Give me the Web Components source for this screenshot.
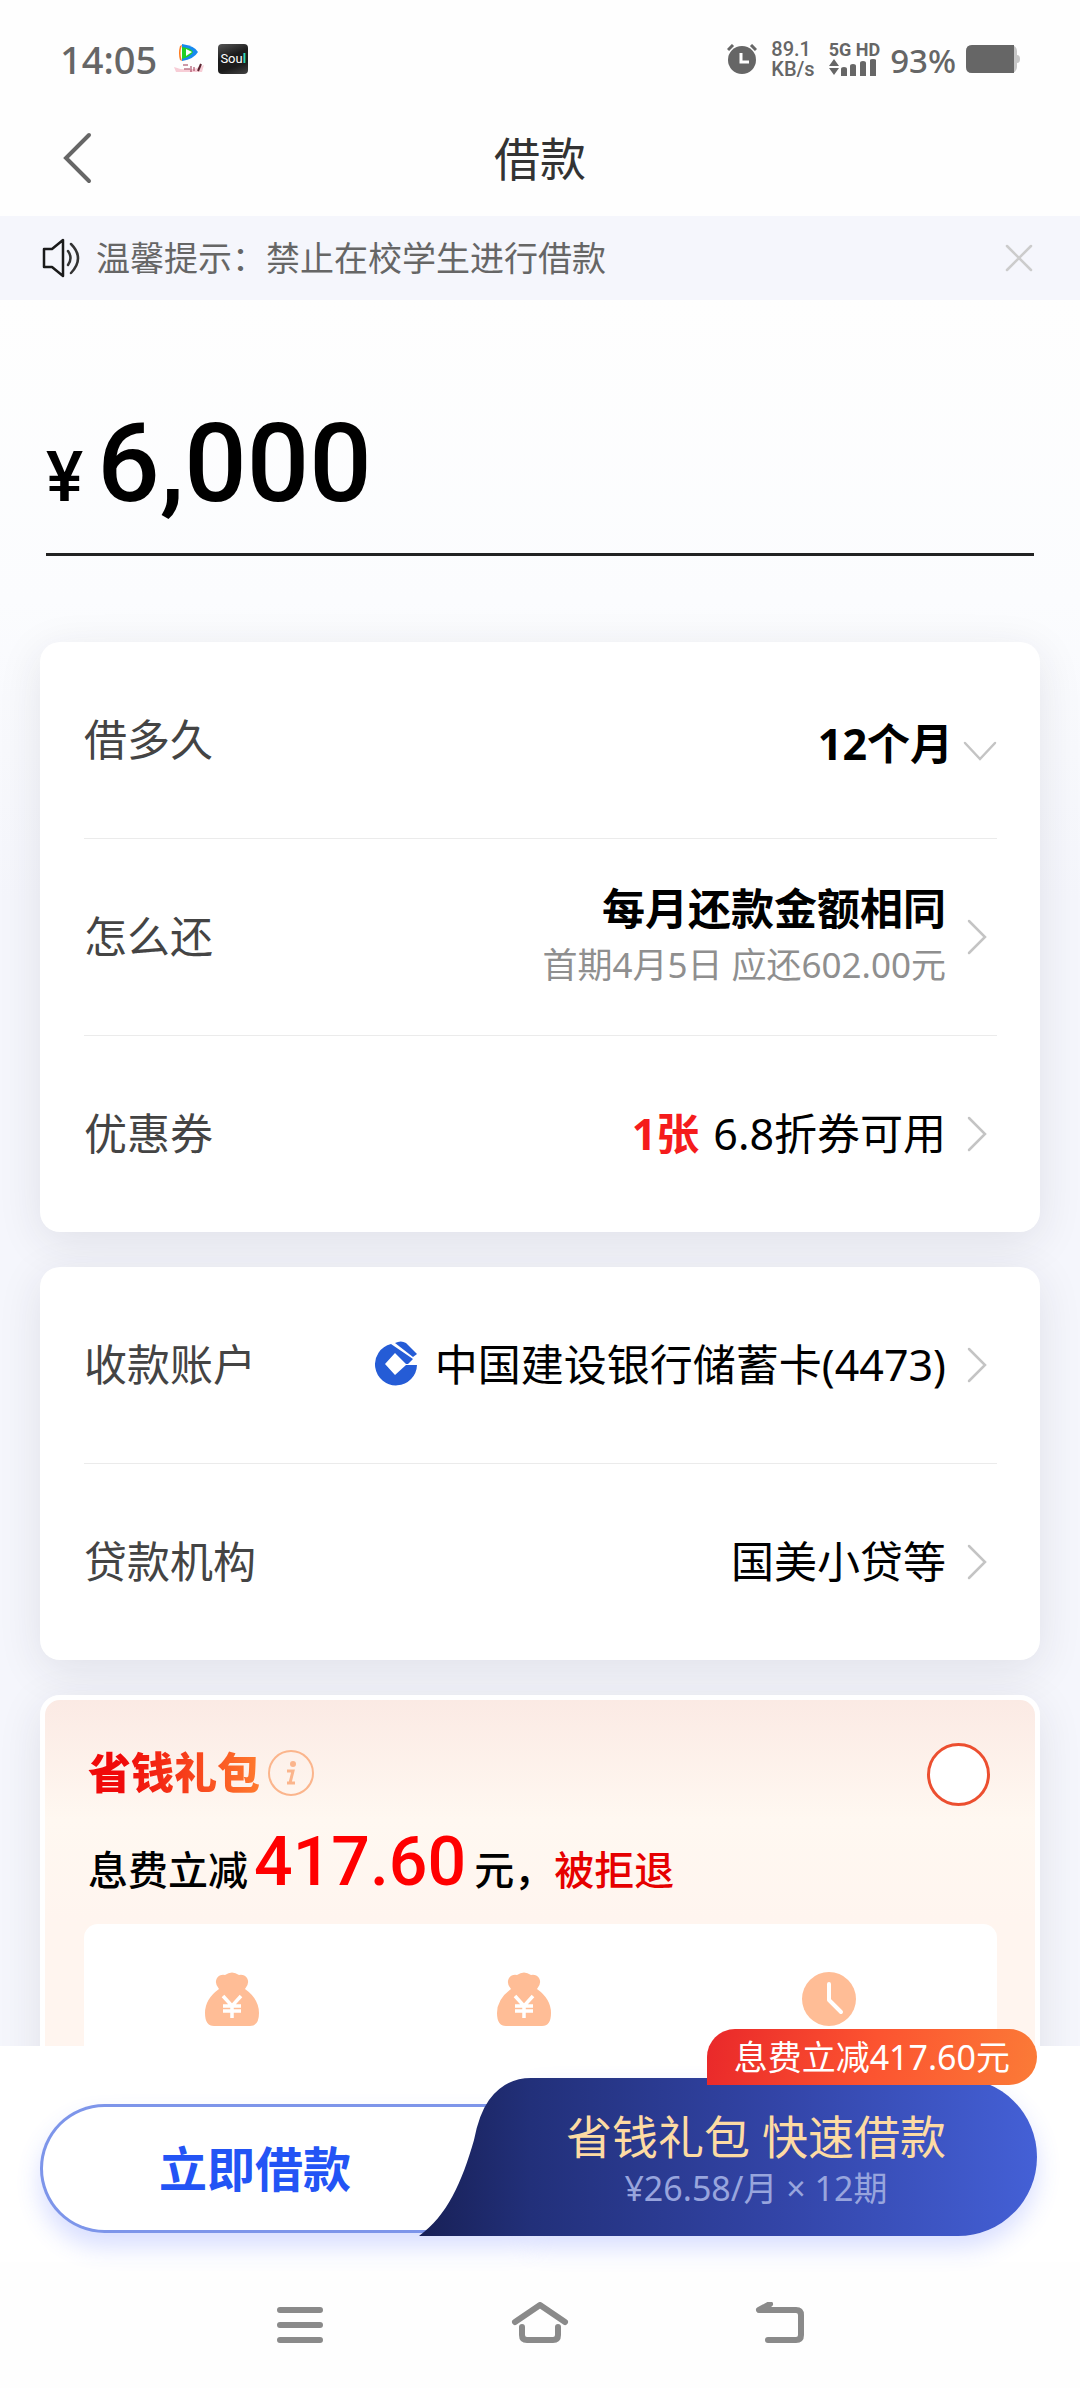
<!DOCTYPE html>
<html lang="zh-CN">
<head>
<meta charset="utf-8">
<meta name="viewport" content="width=device-width, initial-scale=1">
<title>借款</title>
<style>
    html, body {
        margin: 0;
        height: 100%;
    }

    body {
        font-family: "Noto Sans", "Noto Sans CJK SC", sans-serif;
        color: #000;
        background: #fefefe;
    }
</style>
</head>
<body>
<loan-page></loan-page>

<script>
// ---------- icons ----------
const icons = {
    back: '<svg width="30" height="52" viewBox="0 0 30 52"><path d="M27 3 4 26l23 23" fill="none" stroke="#666" stroke-width="4" stroke-linecap="round"/></svg>',
    speaker: '<svg width="40" height="40" viewBox="0 0 40 40" fill="none" stroke="#1a1a1a" stroke-width="2.5" stroke-linejoin="round"><path d="M2 11h8L21 2v36L10 29H2z"/><path d="M26 13q5 7 0 14M29 6q14 14 0 29" stroke="#333" stroke-linecap="round"/></svg>',
    close: '<svg width="28" height="28" viewBox="0 0 28 28"><path d="m2 2 24 24M26 2 2 26" stroke="#ccc" stroke-width="2.5" stroke-linecap="round"/></svg>',
    right: '<svg width="20" height="36" viewBox="0 0 20 36"><path d="m2 2 16 16L2 34" fill="none" stroke="#c4c4c4" stroke-width="2.5" stroke-linecap="round"/></svg>',
    down: '<svg width="34" height="20" viewBox="0 0 34 20"><path d="m2 2 15 16L32 2" fill="none" stroke="#c4c4c4" stroke-width="2.5" stroke-linecap="round"/></svg>',
    bank: '<svg width="42" height="48" viewBox="0 0 42 48"><path d="M16 3A21 21 0 1 0 42 24H31L20 34 10 23 20 12l11 11h2l5-5z" fill="#255cd6"/><path d="M20 2q6-3 11 0l11 11-4 3z" fill="#255cd6"/></svg>',
    bag: '<svg width="54" height="54" viewBox="0 0 54 54"><path d="M14 17q-5-6-2-11 3-4 8-3 7-5 14 0 5-1 8 3 3 5-2 11 14 10 14 24 0 13-9 13H9Q0 54 0 41q0-14 14-24z" fill="#ffbd96"/><path d="m18 24 9 10 9-10M27 34v12M18 34h18M18 39h18" fill="none" stroke="#fff" stroke-width="3.5"/></svg>',
    clock: '<svg width="54" height="54" viewBox="0 0 54 54"><circle cx="27" cy="27" r="27" fill="#ffbd96"/><path d="M27 12v16l12 12" fill="none" stroke="#fff" stroke-width="4" stroke-linecap="round" stroke-linejoin="round"/></svg>',
    info: '<svg width="46" height="46" viewBox="0 0 46 46"><circle cx="23" cy="23" r="22" fill="none" stroke="#fbb58c" stroke-width="2"/><circle cx="25" cy="14" r="3" fill="#fbb58c"/><path d="M19 21h6l-3 12h5M19 33h5" fill="none" stroke="#fbb58c" stroke-width="3"/></svg>',
    menu: '<svg width="58" height="46" viewBox="0 0 58 46"><path d="M9 8h40M9 23h40M9 38h40" stroke="#8a8a8a" stroke-width="6" stroke-linecap="round"/></svg>',
    home: '<svg width="58" height="46" viewBox="0 0 58 46" fill="none" stroke="#8a8a8a" stroke-width="6" stroke-linecap="round" stroke-linejoin="round"><path d="M4 20 29 3l25 17M11 25v8q0 5 5 5h26q5 0 5-5v-8"/></svg>',
    ret: '<svg width="58" height="46" viewBox="0 0 58 46" fill="none" stroke="#8a8a8a" stroke-width="6" stroke-linecap="round" stroke-linejoin="round"><path d="M19 2 8 8h37q5 0 5 5v20q0 5-5 5H17"/></svg>',
    alarm: '<svg width="30" height="30" viewBox="0 0 30 30"><circle cx="15" cy="16" r="14" fill="#666"/><path d="M14 9v9h8" fill="none" stroke="#fff" stroke-width="3"/><path d="m1 6 5-5M29 6l-5-5" stroke="#666" stroke-width="3"/></svg>',
    signal: '<svg width="48" height="18" viewBox="0 0 48 18" fill="#666"><path d="m5 0 5 7H0zM0 9h10l-5 7zM12 10q0-2 3-2t3 2v7h-6zM21 7q0-2 3-2t3 2v10h-6zM31 4q0-2 3-2t3 2v13h-6zM41 1q0-1 3-1t3 1v16h-6z"/></svg>',
    battery: '<svg width="54" height="28" viewBox="0 0 54 28"><rect width="51" height="28" rx="6" fill="#c6c6c6"/><path d="M51 10q3 0 3 4t-3 4z" fill="#c6c6c6"/><path d="M6 0h42v28H6q-6 0-6-6V6q0-6 6-6z" fill="#666"/></svg>',
    video: '<svg width="30" height="30" viewBox="0 0 30 30"><path d="M8 1Q5 9 8 17l-2-1Q4 9 6 2z" fill="#ff7a1c"/><path d="M8 0q13 2 16 8-4 7-16 9z" fill="#1689ee"/><path d="M8 3q9 1 11 5-3 5-11 7z" fill="#21cf25"/><path d="m12 5 6 3-6 4z" fill="#fff"/><path d="M0 23q15 6 30-2l-2 7H2z" fill="#f7cdd6"/><path d="M9 21h5M10 25h6M17 22v6M20 23v4" stroke="#9b3550" stroke-width="1"/><path d="m24 27 3-7" stroke="#5c2430" stroke-width="2"/></svg>'
};

class UiIcon extends HTMLElement {
    constructor() {
        super();
        this.attachShadow({ mode: 'open' });
    }

    connectedCallback() {
        this.shadowRoot.innerHTML = `
            <style>:host{ display:inline-flex; flex:none; } svg{ display:block; }</style>
            ${icons[this.getAttribute('name')] || ''}`;
    }
}

window.customElements.define('ui-icon', UiIcon);

// ---------- status bar ----------
const status_bar = document.createElement('template');
status_bar.innerHTML = `
    <style>
        :host{
            display: flex;
            align-items: center;
            justify-content: space-between;
            height: 82px;
            padding: 18px 60px 0 60px;
            color: #666;
            font-weight: 500;
        }

        .side{
            display: flex;
            align-items: center;
        }

        time{
            font-size: 38px;
            line-height: 40px;
            margin-right: 17px;
        }

        .soul{
            width: 30px;
            height: 30px;
            margin-left: 14px;
            border-radius: 4px;
            background: linear-gradient(160deg, #555, #1c1c1c 40%, #1c1c1c 70%, #444);
            color: #fff;
            font: 13px/30px Roboto, sans-serif;
            text-align: center;
        }

        .soul b{
            color: #2fd8b8;
        }

        .stack{
            display: flex;
            flex-direction: column;
            font-size: 20px;
            line-height: 20px;
        }

        .speed{
            margin: 0 14px;
            font-family: Roboto, sans-serif;
        }

        .net span{
            font-family: Roboto, sans-serif;
            font-size: 18px;
            font-weight: 700;
            line-height: 18px;
        }

        .percent{
            font-size: 33px;
            line-height: 40px;
            margin: 4px 10px 0;
        }
    </style>
    <div class="side">
        <time>14:05</time>
        <ui-icon name="video"></ui-icon>
        <span class="soul">Sou<b>l</b></span>
    </div>
    <div class="side">
        <ui-icon name="alarm"></ui-icon>
        <span class="stack speed"><span>89.1</span><span>KB/s</span></span>
        <span class="stack net"><span>5G HD</span><ui-icon name="signal"></ui-icon></span>
        <span class="percent">93%</span>
        <ui-icon name="battery"></ui-icon>
    </div>
`;

class StatusBar extends HTMLElement {
    constructor() {
        super();
        this.attachShadow({ mode: 'open' });
        this.shadowRoot.appendChild(status_bar.content.cloneNode(true));
    }
}

window.customElements.define('status-bar', StatusBar);

// ---------- title bar ----------
const title_bar = document.createElement('template');
title_bar.innerHTML = `
    <style>
        :host{
            display: grid;
            grid-template-columns: 1fr auto 1fr;
            align-items: center;
            height: 116px;
            padding: 0 62px;
        }

        button{
            display: flex;
            justify-self: start;
            padding: 0;
            border: 0;
            background: none;
        }

        h1{
            margin: 0;
            color: #333;
            font-size: 46px;
            font-weight: 400;
            line-height: 56px;
        }
    </style>
    <button aria-label="返回"><ui-icon name="back"></ui-icon></button>
    <h1><slot></slot></h1>
`;

class TitleBar extends HTMLElement {
    constructor() {
        super();
        this.attachShadow({ mode: 'open' });
        this.shadowRoot.appendChild(title_bar.content.cloneNode(true));
    }
}

window.customElements.define('title-bar', TitleBar);

// ---------- notice ----------
const notice_bar = document.createElement('template');
notice_bar.innerHTML = `
    <style>
        :host{
            display: flex;
            align-items: center;
            height: 84px;
            padding: 0 47px 0 42px;
            background: #f5f6fc;
            color: #666;
            font-size: 34px;
            line-height: 40px;
        }

        span{
            flex: 1;
            margin-left: 14px;
        }

        button{
            display: flex;
            padding: 0;
            border: 0;
            background: none;
        }
    </style>
    <ui-icon name="speaker"></ui-icon>
    <span><slot></slot></span>
    <button aria-label="关闭"><ui-icon name="close"></ui-icon></button>
`;

class NoticeBar extends HTMLElement {
    constructor() {
        super();
        this.attachShadow({ mode: 'open' });
        this.shadowRoot.appendChild(notice_bar.content.cloneNode(true));
        this.shadowRoot.querySelector('button').onclick = () => this.remove();
    }
}

window.customElements.define('notice-bar', NoticeBar);

// ---------- amount ----------
const loan_amount = document.createElement('template');
loan_amount.innerHTML = `
    <style>
        :host{
            display: flex;
            align-items: baseline;
            gap: 14px;
            margin: 0 46px;
            padding: 104px 0 29px;
            border-bottom: 3px solid #222;
            font-family: Roboto, sans-serif;
            font-weight: 500;
        }

        label{
            font-size: 70px;
            line-height: 80px;
        }

        input{
            flex: 1;
            min-width: 0;
            height: 120px;
            padding: 0;
            border: 0;
            outline: 0;
            background: none;
            color: inherit;
            font: inherit;
            font-size: 110px;
            line-height: 120px;
        }
    </style>
    <label for="amount">¥</label>
    <input id="amount" type="text" inputmode="numeric">
`;

class LoanAmount extends HTMLElement {
    constructor() {
        super();
        this.attachShadow({ mode: 'open' });
        this.shadowRoot.appendChild(loan_amount.content.cloneNode(true));
    }

    connectedCallback() {
        this.shadowRoot.querySelector('input').value = this.getAttribute('value');
    }
}

window.customElements.define('loan-amount', LoanAmount);

// ---------- card + rows ----------
const loan_card = document.createElement('template');
loan_card.innerHTML = `
    <style>
        :host{
            display: block;
            margin: 0 40px;
            padding: 0 43px 0 44px;
            border-radius: 20px;
            background: #fff;
            box-shadow: 0 10px 44px rgba(40, 40, 60, .1);
        }
    </style>
    <slot></slot>
`;

class LoanCard extends HTMLElement {
    constructor() {
        super();
        this.attachShadow({ mode: 'open' });
        this.shadowRoot.appendChild(loan_card.content.cloneNode(true));
    }
}

window.customElements.define('loan-card', LoanCard);

const row_style = `
    <style>
        :host{
            display: block;
            border-bottom: 1px solid #ebebeb;
            font-size: 43px;
            line-height: 56px;
        }

        :host(:last-child){
            border-bottom: 0;
        }

        .row{
            display: flex;
            align-items: center;
            height: 196px;
            color: #000;
            text-decoration: none;
        }

        .label{
            flex: 1;
            color: #444;
        }
    </style>
`;

const loan_row = document.createElement('template');
loan_row.innerHTML = row_style + `
    <style>
        .value{
            display: flex;
            flex-direction: column;
            align-items: flex-end;
            margin-right: 21px;
        }

        .line{
            display: flex;
            align-items: center;
        }

        ::slotted(b){
            margin-right: 14px;
            color: #f51c1c;
        }

        ::slotted(ui-icon){
            margin-right: 18px;
        }

        ::slotted(small){
            color: #8f8f8f;
            font-size: 35px;
            line-height: 56px;
        }

        ui-icon{
            margin-right: 10px;
        }
    </style>
    <a class="row" href="#">
        <span class="label"></span>
        <span class="value">
            <span class="line"><slot></slot></span>
            <slot name="sub"></slot>
        </span>
        <ui-icon name="right"></ui-icon>
    </a>
`;

class LoanRow extends HTMLElement {
    constructor() {
        super();
        this.attachShadow({ mode: 'open' });
        this.shadowRoot.appendChild(loan_row.content.cloneNode(true));
    }

    connectedCallback() {
        this.shadowRoot.querySelector('.label').textContent = this.getAttribute('label');
    }
}

window.customElements.define('loan-row', LoanRow);

const loan_term = document.createElement('template');
loan_term.innerHTML = row_style + `
    <style>
        select{
            appearance: none;
            margin-right: 10px;
            padding: 0;
            border: 0;
            background: none;
            color: #000;
            font: inherit;
            font-weight: 700;
            text-align: right;
        }

        .pick{
            display: flex;
            align-items: center;
            padding-top: 8px;
        }

        ui-icon{
            margin-top: 14px;
        }
    </style>
    <div class="row">
        <label class="label" for="term">借多久</label>
        <span class="pick">
            <select id="term">
                <option>3个月</option>
                <option>6个月</option>
                <option selected>12个月</option>
            </select>
            <ui-icon name="down"></ui-icon>
        </span>
    </div>
`;

class LoanTerm extends HTMLElement {
    constructor() {
        super();
        this.attachShadow({ mode: 'open' });
        this.shadowRoot.appendChild(loan_term.content.cloneNode(true));
    }
}

window.customElements.define('loan-term', LoanTerm);

// ---------- gift pack ----------
const gift_card = document.createElement('template');
gift_card.innerHTML = `
    <style>
        :host{
            display: block;
            margin: 0 40px;
            padding: 43px 38px 0 39px;
            border: 5px solid #fff;
            border-radius: 20px;
            background: linear-gradient(#fbeae4, #fff8f1 120px, #fff5ef 220px);
            box-shadow: 0 10px 44px rgba(40, 40, 60, .1);
        }

        .head, .saving{
            display: flex;
            padding: 0 7px 0 4px;
        }

        .head{
            align-items: center;
            height: 63px;
        }

        .head ui-icon{
            margin-bottom: 4px;
        }

        h2{
            margin: 0 8px 4px 0;
            background: linear-gradient(90deg, #f00a0a 20%, #ff7b2e);
            background-clip: text;
            -webkit-background-clip: text;
            color: transparent;
            font-size: 43px;
            font-weight: 900;
            line-height: 56px;
        }

        input{
            appearance: none;
            width: 63px;
            height: 63px;
            margin: 0 0 0 auto;
            border: 3px solid #ec4f30;
            border-radius: 50%;
            background: #fff;
        }

        input:checked{
            background: #ec4f30;
        }

        .saving{
            align-items: baseline;
            margin: 16px 0 22px;
            font-size: 40px;
            font-weight: 500;
            line-height: 56px;
        }

        .saving strong{
            margin: 0 8px 0 6px;
            color: #f00;
            font: 500 68px/80px Roboto, sans-serif;
        }

        .saving em{
            color: #e60000;
            font-style: normal;
        }

        .perks{
            display: grid;
            grid-template-columns: 33fr 32fr 36fr;
            justify-items: center;
            align-items: start;
            height: 240px;
            padding: 48px 6px 0 0;
            border-radius: 14px 14px 0 0;
            background: #fff;
        }
    </style>
    <div class="head">
        <h2>省钱礼包</h2>
        <ui-icon name="info"></ui-icon>
        <input type="checkbox" aria-label="省钱礼包">
    </div>
    <div class="saving">
        <span>息费立减</span><strong>417.60</strong><span>元，</span><em>被拒退</em>
    </div>
    <div class="perks">
        <ui-icon name="bag"></ui-icon>
        <ui-icon name="bag"></ui-icon>
        <ui-icon name="clock"></ui-icon>
    </div>
`;

class GiftCard extends HTMLElement {
    constructor() {
        super();
        this.attachShadow({ mode: 'open' });
        this.shadowRoot.appendChild(gift_card.content.cloneNode(true));
    }
}

window.customElements.define('gift-card', GiftCard);

// ---------- bottom actions ----------
const action_bar = document.createElement('template');
action_bar.innerHTML = `
    <style>
        :host{
            display: flex;
            align-items: flex-end;
            position: relative;
            padding: 32px 43px 26px 40px;
            background: #fff;
        }

        button{
            padding: 0;
            border: 0;
            background: none;
            font: inherit;
        }

        /* runs on under the curved edge of the other button */
        .plain{
            flex: 1;
            height: 129px;
            margin: 0 -112px 3px 0;
            padding: 0 64px 6px 0;
            border: 3px solid #7d95ea;
            border-right: 0;
            border-radius: 65px 0 0 65px;
            background: #fff;
            box-shadow: 0 14px 24px rgba(60, 90, 255, .2);
            color: #2354f5;
            font-size: 48px;
            font-weight: 700;
        }

        .pack{
            display: flex;
            position: relative;
            flex: 0 0 62%;
            height: 158px;
        }

        .pack svg{
            flex: none;
            position: relative;
            z-index: 1;
        }

        .body{
            display: flex;
            flex: 1;
            flex-direction: column;
            align-items: center;
            justify-content: center;
            box-sizing: border-box;
            height: 158px;
            padding: 6px 56px 0 0;
            border-radius: 0 79px 79px 0;
            background: linear-gradient(90deg, #22307a, #3345a8 50%, #4460d6);
            box-shadow: 0 12px 24px rgba(60, 90, 255, .2);
            white-space: nowrap;
        }

        .main{
            color: #fddba3;
            font-size: 46px;
            line-height: 56px;
        }

        .sub{
            color: #98a5dd;
            font-size: 34px;
            line-height: 48px;
        }

        .tag{
            position: absolute;
            top: -17px;
            right: 43px;
            z-index: 2;
            padding: 0 27px;
            border-radius: 29px 29px 29px 0;
            background: linear-gradient(100deg, #e9282a, #fc5330 50%, #fb7b37);
            color: #fff;
            font-size: 34px;
            line-height: 56px;
        }
    </style>
    <button class="plain">立即借款</button>
    <button class="pack">
        <svg width="112" height="158" viewBox="0 0 112 158">
            <defs>
                <linearGradient id="edge">
                    <stop offset="0" stop-color="#182056"/>
                    <stop offset="1" stop-color="#22307a"/>
                </linearGradient>
            </defs>
            <path d="M0 158C28 138 43 104 55 62Q60 36 70 22 86 0 112 0V158z" fill="url(#edge)"/>
        </svg>
        <span class="body">
            <span class="main">省钱礼包 快速借款</span>
            <span class="sub">¥26.58/月 × 12期</span>
        </span>
    </button>
    <span class="tag">息费立减417.60元</span>
`;

class ActionBar extends HTMLElement {
    constructor() {
        super();
        this.attachShadow({ mode: 'open' });
        this.shadowRoot.appendChild(action_bar.content.cloneNode(true));
    }
}

window.customElements.define('action-bar', ActionBar);

// ---------- system navigation ----------
const system_nav = document.createElement('template');
system_nav.innerHTML = `
    <style>
        :host{
            display: flex;
            align-items: center;
            justify-content: center;
            gap: 182px;
            height: 126px;
            background: #fefefe;
        }

        button{
            display: flex;
            padding: 0;
            border: 0;
            background: none;
        }
    </style>
    <button aria-label="菜单"><ui-icon name="menu"></ui-icon></button>
    <button aria-label="主页"><ui-icon name="home"></ui-icon></button>
    <button aria-label="返回"><ui-icon name="ret"></ui-icon></button>
`;

class SystemNav extends HTMLElement {
    constructor() {
        super();
        this.attachShadow({ mode: 'open' });
        this.shadowRoot.appendChild(system_nav.content.cloneNode(true));
    }
}

window.customElements.define('system-nav', SystemNav);

// ---------- page ----------
const loan_page = document.createElement('template');
loan_page.innerHTML = `
    <style>
        :host{
            display: flex;
            flex-direction: column;
            height: 100vh;
            overflow: hidden;
        }

        main{
            display: flex;
            flex: 1;
            flex-direction: column;
            gap: 35px;
            min-height: 0;
            overflow: hidden;
            background: linear-gradient(#fefefe, #fbfcfe 300px, #f5f6fc 600px);
        }

        loan-amount{
            margin-bottom: 51px;
        }

        main > *{
            flex: none;
        }
    </style>
    <status-bar></status-bar>
    <title-bar>借款</title-bar>
    <notice-bar>温馨提示：禁止在校学生进行借款</notice-bar>
    <main>
        <loan-amount value="6,000"></loan-amount>
        <loan-card>
            <loan-term></loan-term>
            <loan-row label="怎么还"><strong>每月还款金额相同</strong><small slot="sub">首期4月5日 应还602.00元</small></loan-row>
            <loan-row label="优惠券"><b>1张</b><span>6.8折券可用</span></loan-row>
        </loan-card>
        <loan-card>
            <loan-row label="收款账户"><ui-icon name="bank"></ui-icon><span>中国建设银行储蓄卡(4473)</span></loan-row>
            <loan-row label="贷款机构"><span>国美小贷等</span></loan-row>
        </loan-card>
        <gift-card></gift-card>
    </main>
    <action-bar></action-bar>
    <system-nav></system-nav>
`;

class LoanPage extends HTMLElement {
    constructor() {
        super();
        this.attachShadow({ mode: 'open' });
        this.shadowRoot.appendChild(loan_page.content.cloneNode(true));
    }
}

window.customElements.define('loan-page', LoanPage);
</script>
</body>
</html>
